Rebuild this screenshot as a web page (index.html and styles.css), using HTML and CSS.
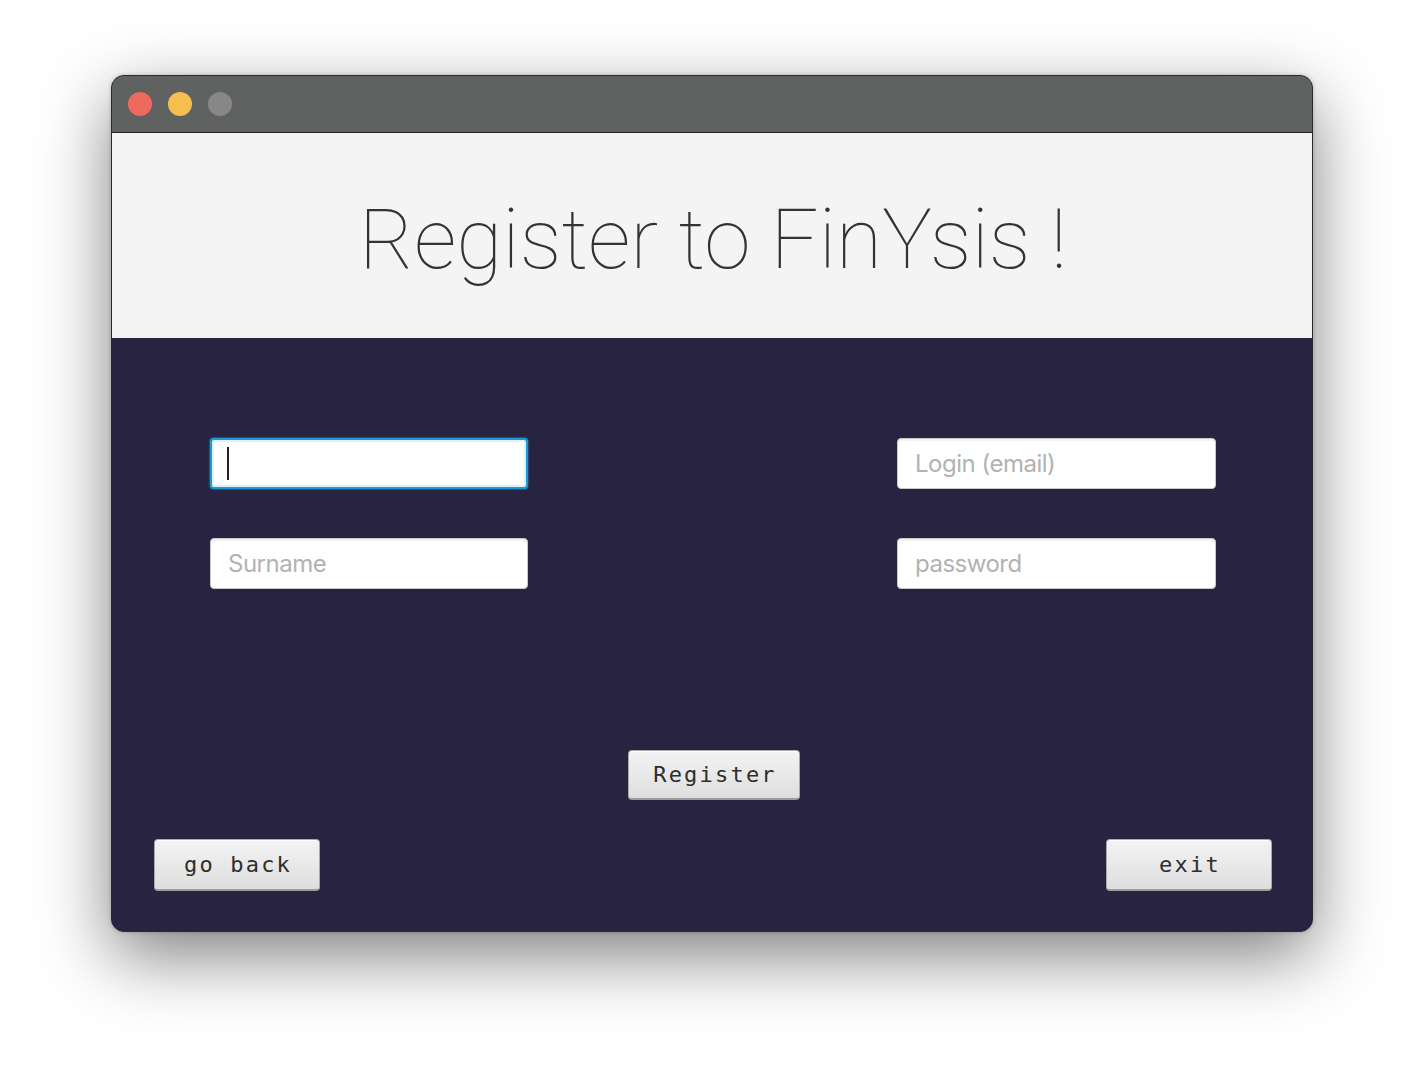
FILE: index.html
```html
<!DOCTYPE html>
<html>
<head>
<meta charset="utf-8">
<link rel="stylesheet" href="styles.css">
</head>
<body>
<div class="window">
  <div class="titlebar">
    <span class="light red"></span>
    <span class="light yellow"></span>
    <span class="light gray"></span>
  </div>
  <div class="header">
    <h1 class="title">Register to FinYsis !</h1>
  </div>
  <div class="main">
    <div class="fields">
      <div class="col">
        <div class="field focused"><span class="caret"></span></div>
        <div class="field"><span class="ph">Surname</span></div>
      </div>
      <div class="col">
        <div class="field"><span class="ph">Login (email)</span></div>
        <div class="field"><span class="ph">password</span></div>
      </div>
    </div>
    <div class="center-row">
      <button class="btn btn-register">Register</button>
    </div>
    <div class="bottom-row">
      <button class="btn btn-back">go back</button>
      <button class="btn btn-exit">exit</button>
    </div>
  </div>
</div>
</body>
</html>
```
FILE: styles.css
```css
html, body {
  margin: 0;
  padding: 0;
  background: #ffffff;
}
body {
  padding: 75px 0 0 111px;
  height: 1080px;
  box-sizing: border-box;
  overflow: hidden;
}
.window {
  width: 1202px;
  height: 857px;
  box-sizing: border-box;
  border: 1px solid #2a2a2a;
  border-radius: 13px;
  overflow: hidden;
  display: flex;
  flex-direction: column;
  box-shadow: 0 24px 70px rgba(0,0,0,0.5), 0 0 4px rgba(0,0,0,0.2);
  background: #272340;
}
.titlebar {
  height: 56px;
  background: #606261;
  border-bottom: 1px solid #1e1e1e;
  display: flex;
  align-items: center;
  gap: 16px;
  padding-left: 16px;
  flex-shrink: 0;
}
.light {
  width: 24px;
  height: 24px;
  border-radius: 50%;
  display: block;
}
.red { background: #ee695e; }
.yellow { background: #f5be4f; }
.gray { background: #868786; }
.header {
  height: 205px;
  background: #f4f4f4;
  display: flex;
  justify-content: center;
  align-items: flex-start;
  flex-shrink: 0;
}
.title {
  margin: 0;
  padding-top: 57px;
  font-family: "Roboto", "Liberation Sans", sans-serif;
  font-weight: 100;
  font-size: 84px;
  line-height: 100px;
  color: #333333;
  letter-spacing: 0;
  padding-left: 2px;
}
.main {
  flex: 1;
  background: #272340;
  display: flex;
  flex-direction: column;
  padding: 100px 40px 40px 42px;
}
.fields {
  display: flex;
  justify-content: space-between;
  padding: 0 56px 0 56px;
}
.col {
  display: flex;
  flex-direction: column;
  gap: 49px;
}
.field {
  width: 318px;
  height: 51px;
  box-sizing: border-box;
  background: #ffffff;
  border: 1px solid #c9c9c9;
  border-radius: 4px;
  box-shadow: inset 0 2px 2px rgba(0,0,0,0.06);
  display: flex;
  align-items: center;
  padding-left: 17px;
  font-family: "Inter", "Liberation Sans", sans-serif;
  font-size: 24px;
  letter-spacing: -0.5px;
}
.col:last-child .field {
  width: 319px;
}
.field.focused {
  border: 2px solid #1a9bd7;
  box-shadow: inset 0 0 0 2px #dff1fa, 0 0 2px #4ab3e4;
  padding-left: 15px;
}
.caret {
  display: block;
  width: 2px;
  height: 33px;
  background: #222222;
}
.ph {
  color: #b2b2b2;
}
.center-row {
  display: flex;
  justify-content: center;
  margin-top: 161px;
  padding-left: 2px;
}
.bottom-row {
  display: flex;
  justify-content: space-between;
  margin-top: 39px;
}
.btn {
  height: 52px;
  box-sizing: border-box;
  border: 1px solid #a9a9a9;
  border-bottom: 2px solid #9c9c9c;
  border-radius: 4px;
  background: linear-gradient(#f3f3f3, #dedede);
  box-shadow: inset 0 1px 0 #ffffff;
  font-family: "DejaVu Sans Mono", "Liberation Mono", monospace;
  font-size: 22px;
  letter-spacing: 2.2px;
  color: #2d2d2d;
  padding: 0;
  padding-left: 2px;
  cursor: default;
}
.btn-register {
  width: 172px;
  height: 50px;
}
.btn-back {
  width: 166px;
}
.btn-exit {
  width: 166px;
}
```
